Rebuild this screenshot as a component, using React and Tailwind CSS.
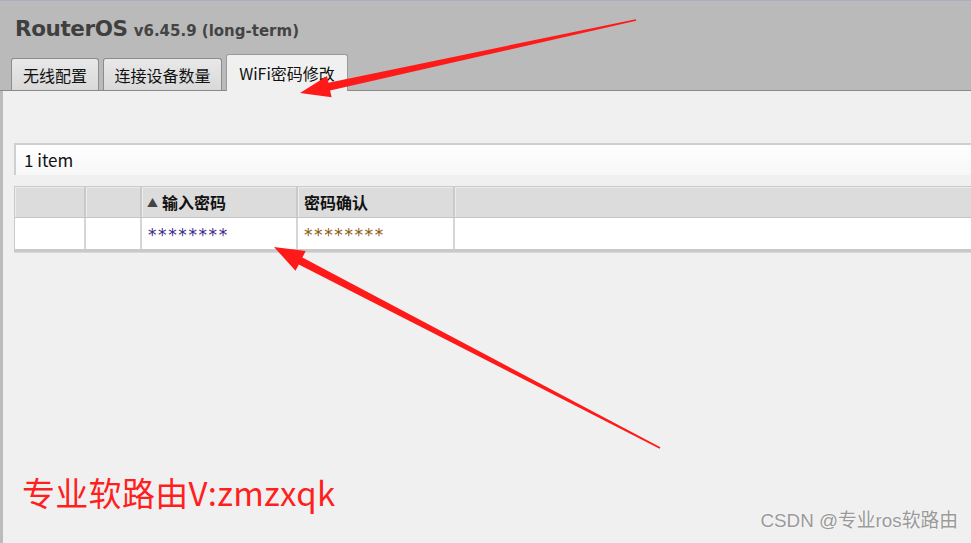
import React from "react";

const TABS = [
  { label: "无线配置", w: "w-[88px]" },
  { label: "连接设备数量", w: "w-[119px]" },
  { label: "WiFi密码修改", w: "w-[122px]", active: true },
];

const FONT = { fontFamily: '"DejaVu Sans", "Noto Sans CJK SC", sans-serif' };

function Arrows() {
  return (
    <svg className="pointer-events-none absolute inset-0" width="971" height="543" viewBox="0 0 971 543">
      <polygon
        fill="#ff1a1a"
        points="636.2,20.8 330.1,90.5 331.6,97.3 300,93 327,75.9 328.5,82.7 635.8,19.2"
      />
      <polygon
        fill="#ff1a1a"
        points="660.4,447.3 302.4,257.4 305.7,251.1 274,247 295.5,270.7 298.8,264.4 659.6,448.7"
      />
    </svg>
  );
}

export default function App() {
  return (
    <div
      className="relative flex h-[543px] w-[971px] flex-col overflow-hidden bg-[#f0f0f0]"
      style={{ fontFamily: '"Noto Sans CJK SC", "DejaVu Sans", sans-serif' }}
    >
      {/* header */}
      <header className="flex h-[91px] shrink-0 flex-col border-t border-[#a9adbf] bg-[#bababa]">
        <div className="flex items-baseline gap-[6px] pl-[15px] pt-[12px] font-bold text-[#3f3f3f]" style={FONT}>
          <span className="text-[21.5px] tracking-[-0.4px]">RouterOS</span>
          <span className="text-[15px] text-[#444]">v6.45.9 (long-term)</span>
        </div>
        <div className="mt-auto flex items-end gap-[4px] border-b border-[#8a8a8a] pl-[11px]">
          {TABS.map((t) => (
            <div
              key={t.label}
              className={`${t.w} flex items-center justify-center rounded-t-[3px] border border-b-0 text-[16px] ${
                t.active
                  ? "-mb-px h-[37px] border-[#9a9a9a] bg-[#f0f0f0] text-[#111]"
                  : "h-[32px] border-[#8c8c8c] bg-gradient-to-b from-[#e8e8e8] to-[#d9d9d9] text-[#111]"
              }`}
            >
              {t.label}
            </div>
          ))}
        </div>
      </header>

      {/* body */}
      <main className="flex flex-1 flex-col border-l-[3px] border-[#bcbcbc] pl-[11px] pt-[52px]">
        <div className="flex h-[32px] items-center border-l-2 border-t-2 border-[#cfcfcf] bg-gradient-to-b from-white to-[#f7f7f7] pl-[8px] text-[17px] text-[#111]">
          1 item
        </div>

        <div className="mt-[11px] border-b-[3px] border-l border-t border-[#c9c9c9] shadow-[0_1px_0_#d8d8d8]">
          <div className="flex h-[31px] border-b border-[#c4c4c4] bg-[#dcdcdc] text-[16px] font-bold text-[#111]">
            <div className="w-[71px] border-r-2 border-[#cacaca] shadow-[inset_1px_1px_0_#ececec]" />
            <div className="w-[56px] border-r-2 border-[#cacaca] shadow-[inset_1px_1px_0_#ececec]" />
            <div className="flex w-[156px] items-center gap-[4px] border-r-2 border-[#cacaca] pl-[5px] shadow-[inset_1px_1px_0_#ececec]">
              <span className="text-[11px] text-[#444]">▲</span>
              <span>输入密码</span>
            </div>
            <div className="flex w-[157px] items-center border-r-2 border-[#cacaca] pl-[6px] shadow-[inset_1px_1px_0_#ececec]">
              密码确认
            </div>
            <div className="flex-1 shadow-[inset_1px_1px_0_#ececec]" />
          </div>
          <div className="flex h-[31px] bg-white text-[17px]" style={{ fontFamily: '"DejaVu Sans", sans-serif' }}>
            <div className="w-[71px] border-r-2 border-[#d6d6d6]" />
            <div className="w-[56px] border-r-2 border-[#d6d6d6]" />
            <div className="flex w-[156px] items-center border-r-2 border-[#d6d6d6] pl-[6px] pt-[4px] tracking-[1.6px] text-[#3a2a88]">
              ********
            </div>
            <div className="flex w-[157px] items-center border-r-2 border-[#d6d6d6] pl-[6px] pt-[4px] tracking-[1.6px] text-[#8a5a10]">
              ********
            </div>
            <div className="flex-1" />
          </div>
        </div>

        <div className="mt-auto flex items-end justify-between pb-[8px] pl-[8px] pr-[13px]">
          <span className="mb-[26px] text-[33px] leading-none tracking-[0.3px] text-[#ff1f1f]">专业软路由V:zmzxqk</span>
          <span
            className="text-[18.8px] text-[#9a9a9a]"
            style={{ textShadow: "0 0 2px #fff", fontFamily: '"Liberation Sans", "Noto Sans CJK SC", sans-serif' }}
          >
            CSDN @专业ros软路由
          </span>
        </div>
      </main>

      <Arrows />
    </div>
  );
}
